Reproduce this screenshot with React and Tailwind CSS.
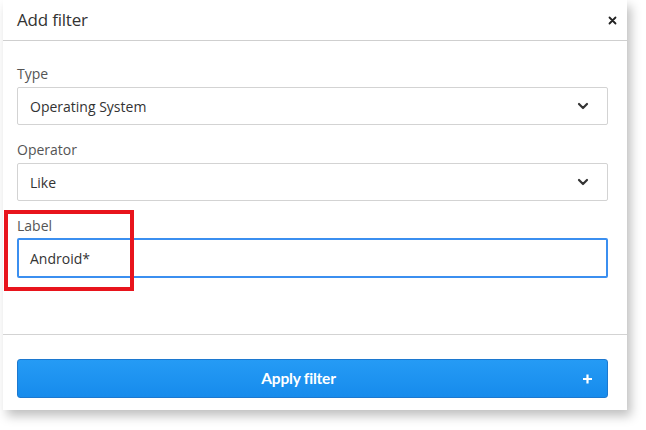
import React from 'react';

const Chevron = () => (
    <svg width="12" height="8" viewBox="0 0 12 8" className="text-[#333]">
        <path d="M2 2l4 4 4-4" fill="none" stroke="currentColor" strokeWidth="2.2" strokeLinecap="round" strokeLinejoin="round" />
    </svg>
);

const SelectBox = ({ value }) => (
    <div className="h-[38px] border border-[#d3d3d3] rounded-[2px] flex items-center justify-between pl-[12px] pr-[18px] text-[14px] text-[#333]">
        <span>{value}</span>
        <Chevron />
    </div>
);

const Field = ({ label, children, gap = 'mt-[3px]' }) => (
    <div>
        <div className="h-[20px] leading-[20px] text-[14px] text-[#555]">{label}</div>
        <div className={gap}>{children}</div>
    </div>
);

export default function App() {
    return (
        <div className="w-[646px] h-[430px] bg-white relative" style={{ fontFamily: '"Open Sans", sans-serif' }}>
            <div className="ml-[3px] w-[624px] h-[410px] bg-white shadow-[4px_6px_10px_rgba(0,0,0,0.25)] flex flex-col">
                {/* Header */}
                <div className="h-[41px] border-b border-[#cfcfcf] flex items-center justify-between pl-[14px] pr-[10px]">
                    <span className="text-[17px] text-[#333] tracking-[-0.2px]">Add filter</span>
                    <svg width="9" height="9" viewBox="0 0 9 9">
                        <path d="M1.5 1.5l6 6M7.5 1.5l-6 6" stroke="#222" strokeWidth="1.8" strokeLinecap="round" />
                    </svg>
                </div>

                {/* Body */}
                <div className="pl-[14px] pr-[19px] pt-[23px] h-[294px] border-b border-[#d3d3d3] flex flex-col gap-[15px]">
                    <Field label="Type">
                        <SelectBox value="Operating System" />
                    </Field>
                    <Field label="Operator">
                        <SelectBox value="Like" />
                    </Field>
                    <Field label="Label" gap="mt-[2px]">
                        <div className="h-[40px] border-2 border-[#3b8ff0] rounded-[2px] flex items-center pl-[11px] text-[14px] text-[#333]">
                            Android*
                        </div>
                    </Field>
                </div>

                {/* Footer */}
                <div className="pl-[14px] pr-[19px] pt-[24px]">
                    <button className="w-full h-[39px] rounded-[3px] border border-[#1c78cf] bg-gradient-to-b from-[#259bf5] to-[#168bec] relative flex items-center justify-center pr-[28px]">
                        <span className="font-bold text-white tracking-[-0.2px]" style={{ fontFamily: 'Lato, sans-serif', fontSize: '15.5px' }}>Apply filter</span>
                        <span className="absolute right-[14px] top-1/2 -translate-y-1/2">
                            <svg width="11" height="11" viewBox="0 0 11 11">
                                <path d="M5.5 1v9M1 5.5h9" stroke="white" strokeWidth="2.2" />
                            </svg>
                        </span>
                    </button>
                </div>
            </div>

            {/* annotation box */}
            <div className="absolute left-[4px] top-[210px] w-[130px] h-[81px] border-[4px] border-[#e8141c]" />
        </div>
    );
}
